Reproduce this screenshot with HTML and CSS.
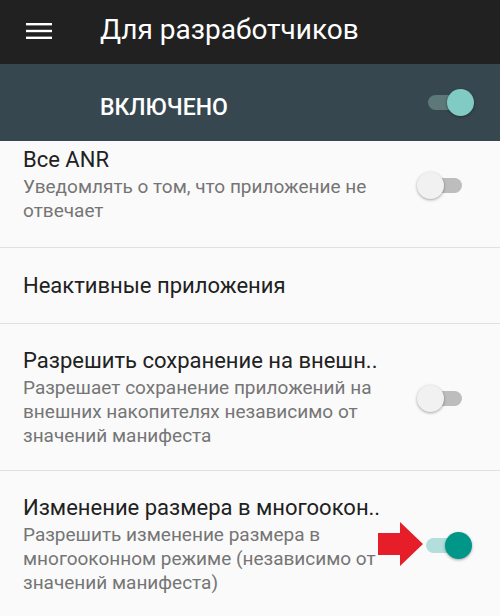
FILE: index.html
```html
<!DOCTYPE html>
<html lang="ru">
<head>
    <meta charset="UTF-8">
    <meta name="viewport" content="width=device-width, initial-scale=1.0">
    <title>Для разработчиков</title>
    <link rel="stylesheet" href="styles.css">
</head>
<body>
    <header class="toolbar">
        <svg class="menu-icon" width="26" height="16" viewBox="0 0 26 16">
            <rect x="0" y="0" width="26" height="2.4" fill="#fff"/>
            <rect x="0" y="6.8" width="26" height="2.4" fill="#fff"/>
            <rect x="0" y="13.6" width="26" height="2.4" fill="#fff"/>
        </svg>
        <h1 class="toolbar-title">Для разработчиков</h1>
    </header>

    <div class="master">
        <span class="master-label">ВКЛЮЧЕНО</span>
        <span class="switch switch-master"><span class="thumb"></span></span>
    </div>

    <ul class="prefs">
        <li class="item item-first">
            <div class="text">
                <div class="title">Все ANR</div>
                <div class="summary">Уведомлять о том, что приложение не отвечает</div>
            </div>
            <span class="switch"><span class="thumb"></span></span>
        </li>
        <li class="item item-single">
            <div class="text">
                <div class="title">Неактивные приложения</div>
            </div>
        </li>
        <li class="item">
            <div class="text">
                <div class="title">Разрешить сохранение на внешн..</div>
                <div class="summary">Разрешает сохранение приложений на внешних накопителях независимо от значений манифеста</div>
            </div>
            <span class="switch"><span class="thumb"></span></span>
        </li>
        <li class="item item-last">
            <div class="text">
                <div class="title">Изменение размера в многоокон..</div>
                <div class="summary">Разрешить изменение размера в многооконном режиме (независимо от значений манифеста)</div>
            </div>
            <span class="switch switch-on"><span class="thumb"></span></span>
            <svg class="arrow" width="46" height="44" viewBox="0 0 46 44">
                <polygon points="0,11 22,11 22,0 45,22 22,44 22,33 0,33" fill="#e61e2a"/>
            </svg>
        </li>
    </ul>
</body>
</html>
```

FILE: styles.css
```css
html, body {
    margin: 0;
    padding: 0;
    height: 100%;
    overflow: hidden;
    background: #fafafa;
    font-family: Roboto, "Noto Sans", sans-serif;
}
.toolbar {
    height: 64px;
    background: #212121;
    display: flex;
    align-items: center;
    padding-left: 26px;
}
.menu-icon {
    display: block;
    margin-top: -2px;
}
.toolbar-title {
    margin: -6px 0 0 48px;
    color: #fff;
    font-size: 28px;
    font-weight: 400;
}
.master {
    height: 77px;
    background: #37474f;
    display: flex;
    align-items: center;
    justify-content: space-between;
    padding: 0 32px 0 100px;
}
.master-label {
    color: #fff;
    font-size: 23px;
    font-weight: 500;
    margin-top: 9px;
}
.prefs {
    list-style: none;
    margin: 0;
    padding: 0;
}
.item {
    position: relative;
    display: flex;
    align-items: center;
    padding: 24px 38px 22px 23px;
    border-bottom: 1px solid #e0e0e0;
}
.item-first {
    padding-top: 6px;
    padding-bottom: 24px;
}
.item-single {
    padding-top: 25px;
    padding-bottom: 24px;
}
.item-last {
    border-bottom: none;
}
.text {
    flex: 1;
    max-width: 370px;
}
.title {
    color: #212121;
    font-size: 22px;
    line-height: 26px;
    white-space: nowrap;
}
.summary {
    color: #757575;
    font-size: 19px;
    line-height: 24px;
    margin-top: 2px;
}
.switch {
    position: relative;
    width: 40px;
    height: 15px;
    border-radius: 8px;
    background: #bdbdbd;
    margin-left: auto;
    flex-shrink: 0;
}
.thumb {
    position: absolute;
    left: -5px;
    top: -6px;
    width: 27px;
    height: 27px;
    border-radius: 50%;
    background: #f1f1f1;
    box-shadow: 0 1px 3px rgba(0, 0, 0, 0.35);
}
.switch-on {
    background: #b2dfdb;
    margin-right: -4px;
}
.switch-on .thumb {
    left: auto;
    right: -6px;
    background: #009688;
}
.switch-master {
    background: #5c7878;
}
.switch-master .thumb {
    left: auto;
    right: -6px;
    background: #80cbc4;
}
.arrow {
    position: absolute;
    left: 378px;
    top: 51px;
}
```
